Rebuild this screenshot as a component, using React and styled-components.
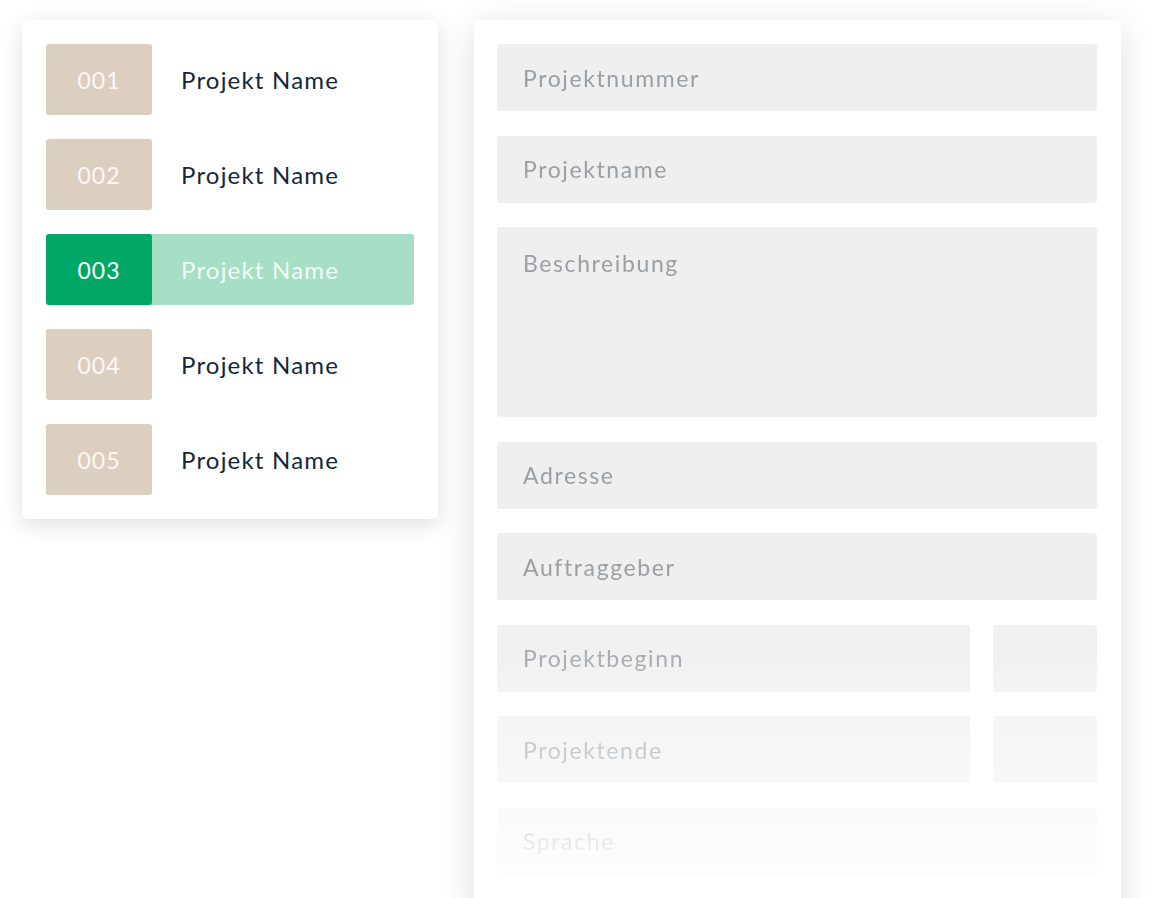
import styled, { createGlobalStyle } from 'styled-components'

const GlobalStyle = createGlobalStyle`
  html, body {
    margin: 0;
    padding: 0;
    background: #ffffff;
    font-family: "Lato", "Noto Sans", sans-serif;
  }
`

const projects = [
  { id: '001', name: 'Projekt Name' },
  { id: '002', name: 'Projekt Name' },
  { id: '003', name: 'Projekt Name', active: true },
  { id: '004', name: 'Projekt Name' },
  { id: '005', name: 'Projekt Name' },
]

const App = () => {
  return (
    <Page>
      <GlobalStyle />
      <ListCard>
        {projects.map((p) => (
          <Row key={p.id} $active={p.active}>
            <Badge $active={p.active}>{p.id}</Badge>
            <Name $active={p.active}>{p.name}</Name>
          </Row>
        ))}
      </ListCard>
      <FormCard>
        <Fields>
          <Field>Projektnummer</Field>
          <Field>Projektname</Field>
          <Field $tall>Beschreibung</Field>
          <Field>Adresse</Field>
          <Field>Auftraggeber</Field>
          <Split>
            <Field>Projektbeginn</Field>
            <Field />
          </Split>
          <Split>
            <Field>Projektende</Field>
            <Field />
          </Split>
          <Field>Sprache</Field>
        </Fields>
      </FormCard>
    </Page>
  )
}

const Page = styled.div`
  display: flex;
  align-items: flex-start;
  gap: 36px;
  width: 1152px;
  height: 898px;
  overflow: hidden;
  box-sizing: border-box;
  padding: 20px 0 0 22px;
`

const ListCard = styled.div`
  width: 416px;
  box-sizing: border-box;
  padding: 24px;
  background: #fff;
  border-radius: 6px;
  box-shadow: 0 6px 22px rgba(0, 0, 0, 0.13);
  display: flex;
  flex-direction: column;
  gap: 24px;
`

const Row = styled.div`
  display: flex;
  align-items: center;
  height: 71px;
  border-radius: 3px;
  background: ${(p) => (p.$active ? '#a6dfc6' : 'transparent')};
`

const Badge = styled.div`
  width: 106px;
  height: 71px;
  flex-shrink: 0;
  display: flex;
  align-items: center;
  justify-content: center;
  border-radius: 3px;
  background: ${(p) => (p.$active ? '#00a867' : '#ddcfbf')};
  color: ${(p) => (p.$active ? '#ffffff' : '#fbf8f4')};
  font-size: 23px;
  letter-spacing: 1px;
`

const Name = styled.div`
  margin-left: 29px;
  font-size: 24px;
  letter-spacing: 1.2px;
  color: ${(p) => (p.$active ? '#f2fbf7' : '#13263b')};
`

const FormCard = styled.div`
  width: 647px;
  height: 900px;
  box-sizing: border-box;
  padding: 24px 24px 0 23px;
  background: #fff;
  border-radius: 4px;
  box-shadow: 0 8px 36px rgba(0, 0, 0, 0.13);
`

const Fields = styled.div`
  display: flex;
  flex-direction: column;
  gap: 24.5px;
  -webkit-mask-image: linear-gradient(to bottom, #000 0px, #000 570px, rgba(0,0,0,0.04) 854px);
  mask-image: linear-gradient(to bottom, #000 0px, #000 570px, rgba(0,0,0,0.04) 854px);
`

const Field = styled.div`
  flex: 0 0 auto;
  height: ${(p) => (p.$tall ? '190px' : '67px')};
  box-sizing: border-box;
  padding: ${(p) => (p.$tall ? '22px' : '0')} 26px 0;
  display: flex;
  align-items: ${(p) => (p.$tall ? 'flex-start' : 'center')};
  background: #efefef;
  border-radius: 3px;
  color: #9a9fa4;
  font-size: 23px;
  letter-spacing: 1.6px;
`

const Split = styled.div`
  display: flex;
  gap: 23px;
  & > :first-child {
    flex: 1 1 auto;
  }
  & > :last-child {
    flex: 0 0 104px;
  }
`

export default App
